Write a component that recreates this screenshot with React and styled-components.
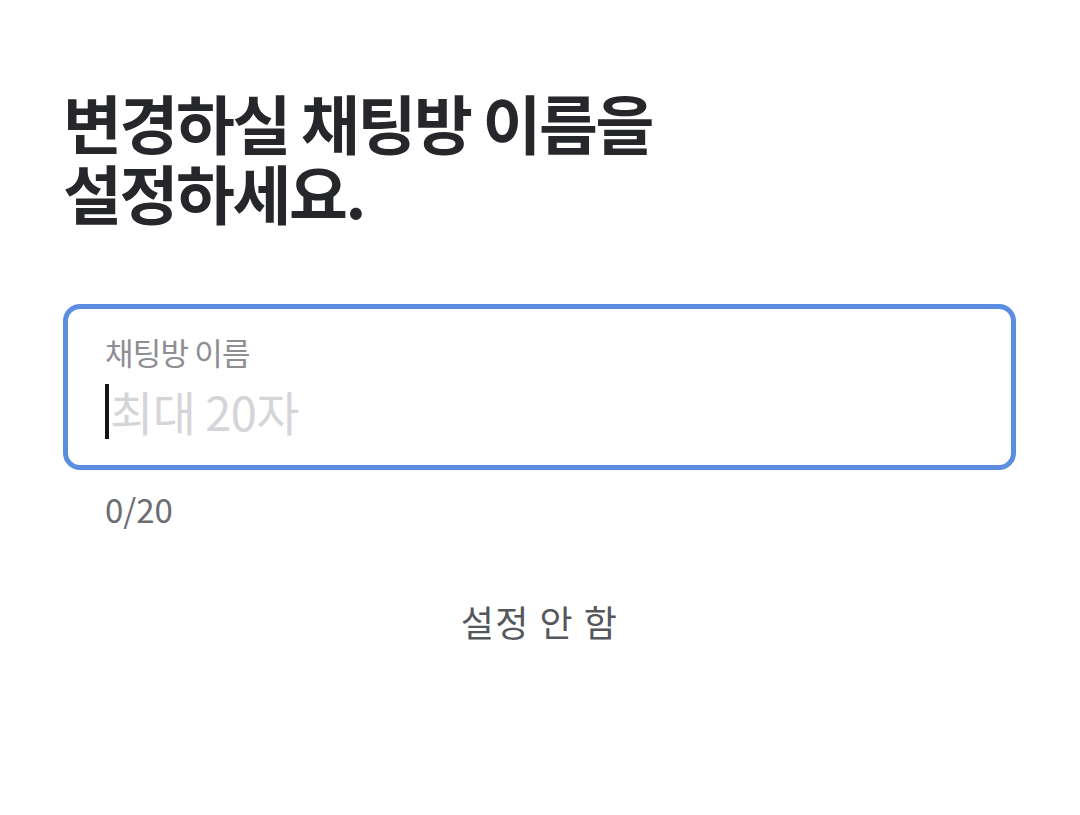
import React, { useState } from 'react';
import styled, { createGlobalStyle } from 'styled-components';

const GlobalStyle = createGlobalStyle`
  html, body {
    margin: 0;
    padding: 0;
    background: #ffffff;
    font-family: "Noto Sans CJK KR", "Noto Sans", sans-serif;
  }
`;

const Page = styled.div`
  width: 1080px;
  height: 815px;
  box-sizing: border-box;
  padding: 86px 64px 0 63px;
  display: flex;
  flex-direction: column;
`;

const Title = styled.h1`
  margin: 0;
  font-size: 64px;
  font-weight: 700;
  letter-spacing: -2.4px;
  color: #26272b;
`;

const TitleLine = styled.span`
  display: block;
  height: 70px;
  line-height: 70px;
`;

const Field = styled.label`
  margin-top: 78px;
  height: 166px;
  box-sizing: border-box;
  border: 5px solid #5b8ee0;
  border-radius: 17px;
  padding: 21px 37px 0;
  display: flex;
  flex-direction: column;
`;

const Label = styled.span`
  font-size: 31px;
  line-height: 44px;
  color: #8e8e93;
  letter-spacing: -0.8px;
`;

const InputRow = styled.div`
  margin-top: 7px;
  display: flex;
  align-items: center;
  height: 60px;
`;

const Caret = styled.span`
  flex: none;
  width: 4px;
  height: 55px;
  margin-right: 1px;
  background: #141414;
`;

const Input = styled.input`
  flex: 1;
  min-width: 0;
  border: none;
  outline: none;
  padding: 0;
  background: transparent;
  font-family: inherit;
  font-size: 47px;
  line-height: 60px;
  height: 60px;
  color: #1c1c1e;
  caret-color: ${(p) => (p.$empty ? 'transparent' : '#111')};
  letter-spacing: -0.6px;
  &::placeholder {
    color: #d5d5d9;
  }
`;

const Counter = styled.div`
  margin-top: 17px;
  padding-left: 42px;
  font-size: 33px;
  line-height: 44px;
  color: #6c6d72;
`;

const SkipButton = styled.button`
  align-self: center;
  margin-top: 65px;
  border: none;
  background: none;
  padding: 0;
  font-family: inherit;
  font-size: 36px;
  line-height: 50px;
  color: #55575d;
  letter-spacing: 1.5px;
  cursor: pointer;
`;

export default function App() {
  const [name, setName] = useState('');
  const empty = name.length === 0;

  return (
    <>
      <GlobalStyle />
      <Page>
        <Title>
          <TitleLine>변경하실 채팅방 이름을</TitleLine>
          <TitleLine>설정하세요.</TitleLine>
        </Title>
        <Field>
          <Label>채팅방 이름</Label>
          <InputRow>
            {empty && <Caret />}
            <Input
              autoFocus
              maxLength={20}
              placeholder="최대 20자"
              value={name}
              $empty={empty}
              onChange={(e) => setName(e.target.value)}
            />
          </InputRow>
        </Field>
        <Counter>{name.length}/20</Counter>
        <SkipButton>설정 안 함</SkipButton>
      </Page>
    </>
  );
}
